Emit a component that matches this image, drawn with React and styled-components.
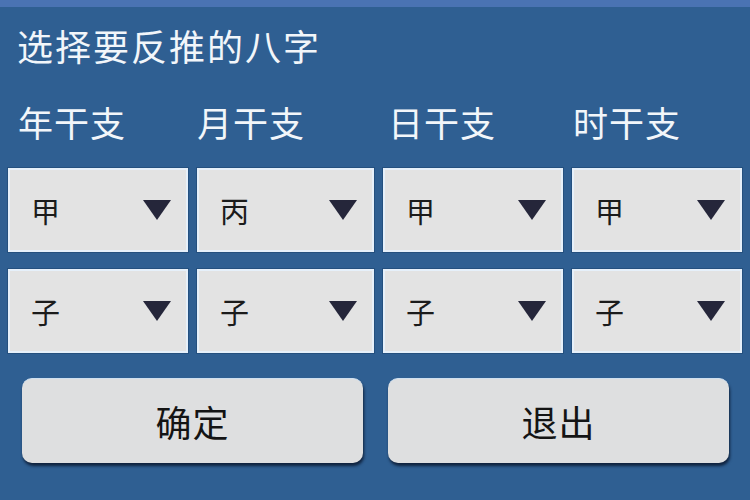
import React from "react";
import styled, { createGlobalStyle } from "styled-components";

const Global = createGlobalStyle`
  html, body {
    margin: 0;
    padding: 0;
    background: #2f5f92;
  }
  body {
    font-family: "Noto Sans CJK SC", "Noto Sans", sans-serif;
  }
`;

const Screen = styled.div`
  width: 750px;
  height: 500px;
  background: #2f5f92;
  display: flex;
  flex-direction: column;
  overflow: hidden;
`;

const StatusStrip = styled.div`
  height: 7px;
  background: #4a73b3;
`;

const Title = styled.h1`
  margin: 0;
  height: 76px;
  display: flex;
  align-items: center;
  padding-left: 17px;
  font-size: 36px;
  font-weight: 400;
  letter-spacing: 2px;
  color: #f2f6fa;
`;

const Body = styled.div`
  padding: 0 8px;
  display: flex;
  flex-direction: column;
`;

const Columns = styled.div`
  display: grid;
  grid-template-columns: 180px 177px 180px 170px;
  column-gap: 9px;
  row-gap: 17px;
`;

const LabelRow = styled(Columns)`
  height: 85px;
  align-items: center;
`;

const Label = styled.div`
  padding-left: ${(p) => p.$indent || 0}px;
  padding-bottom: 8px;
  font-size: 35px;
  letter-spacing: 1px;
  color: #f2f6fa;
`;

const Select = styled.div`
  height: 84px;
  box-sizing: border-box;
  background: #e3e3e3;
  border: 2px solid #e6f0fa;
  box-shadow: 0 0 0 1px #24507f;
  display: flex;
  align-items: center;
  justify-content: space-between;
  padding: 0 15px 0 21px;
  font-size: 29px;
  color: #1b1b1b;
`;

const Arrow = styled.svg`
  width: 28px;
  height: 20px;
  flex: none;
`;

const Actions = styled.div`
  display: flex;
  gap: 25px;
  padding: 25px 0 0 14px;
`;

const Button = styled.button`
  width: 341px;
  height: 85px;
  border: none;
  border-top: 1px solid #cfe0f0;
  border-radius: 10px;
  background: #dedfe0;
  box-shadow: 1px 3px 3px rgba(5, 15, 35, 0.75);
  font-family: "Noto Sans CJK SC", "Noto Sans", sans-serif;
  font-size: 36px;
  color: #141414;
  letter-spacing: 1px;
  padding: 0;
  cursor: pointer;
`;

const DropArrow = () => (
  <Arrow viewBox="0 0 28 20">
    <polygon points="0,0 28,0 14,20" fill="#25263a" />
  </Arrow>
);

const pillars = [
  { label: "年干支", indent: 10, stem: "甲", branch: "子" },
  { label: "月干支", indent: 0, stem: "丙", branch: "子" },
  { label: "日干支", indent: 5, stem: "甲", branch: "子" },
  { label: "时干支", indent: 1, stem: "甲", branch: "子" },
];

export default function App() {
  return (
    <>
      <Global />
      <Screen>
        <StatusStrip />
        <Title>选择要反推的八字</Title>
        <Body>
          <LabelRow>
            {pillars.map((p) => (
              <Label key={p.label} $indent={p.indent}>
                {p.label}
              </Label>
            ))}
          </LabelRow>
          <Columns>
            {pillars.map((p) => (
              <Select key={p.label + "s"}>
                <span>{p.stem}</span>
                <DropArrow />
              </Select>
            ))}
            {pillars.map((p) => (
              <Select key={p.label + "b"}>
                <span>{p.branch}</span>
                <DropArrow />
              </Select>
            ))}
          </Columns>
          <Actions>
            <Button>确定</Button>
            <Button>退出</Button>
          </Actions>
        </Body>
      </Screen>
    </>
  );
}
